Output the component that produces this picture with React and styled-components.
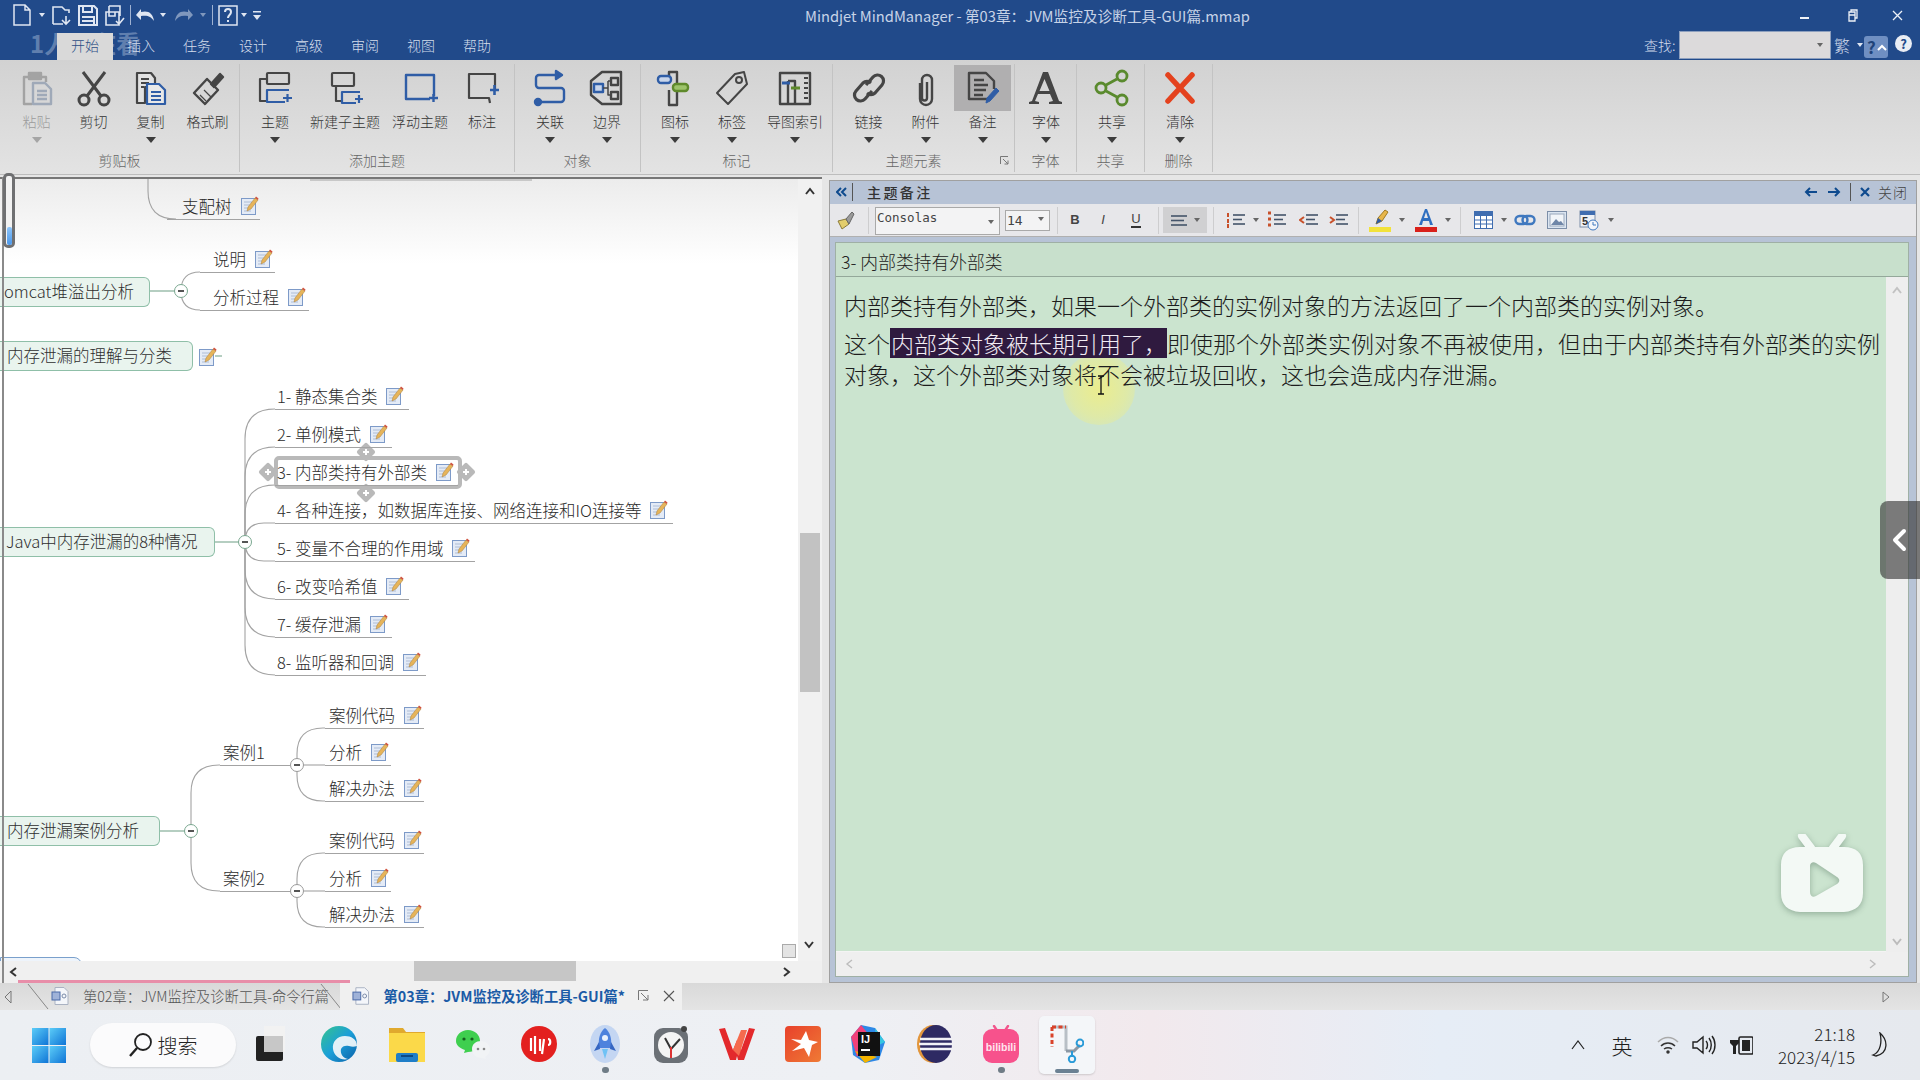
import React from 'react';
import styled, { createGlobalStyle } from 'styled-components';

const CJK = `"Noto Sans CJK SC", "Noto Sans", sans-serif`;
const CANVAS_TOP = 179;

const GlobalStyle = createGlobalStyle`
  html, body { margin: 0; padding: 0; background: #e6e6e6; }
  body { font-family: ${CJK}; overflow: hidden; }
  * { box-sizing: border-box; }
`;

const Page = styled.div`
  position: relative;
  width: 1920px;
  height: 1080px;
  display: flex;
  flex-direction: column;
  overflow: hidden;
`;

/* title bar */
const TitleBar = styled.header`
  height: 60px;
  background: #214a8a;
  color: #d3dcec;
  flex: none;
  position: relative;
`;
const TopRow = styled.div`
  height: 30px;
  display: flex;
  align-items: center;
  padding-left: 8px;
`;
const Qat = styled.div`
  width: ${p => p.$w}px;
  margin-left: ${p => p.$ml || 0}px;
  display: flex;
  justify-content: center;
  align-items: center;
  flex: none;
`;
const QatSep = styled.i`
  width: 1px;
  height: 20px;
  background: #9fb2d2;
  margin-left: ${p => p.$ml || 0}px;
  flex: none;
`;
const WhiteCaret = styled.i`
  width: 0;
  height: 0;
  border-left: 3.5px solid transparent;
  border-right: 3.5px solid transparent;
  border-top: 4px solid ${p => p.$c || '#dfe6f2'};
`;
const AppTitle = styled.div`
  position: absolute;
  left: 805px;
  top: 4px;
  font-size: 14.7px;
  line-height: 24px;
  white-space: nowrap;
  color: #c7d3e7;
`;
const WinControls = styled.div`
  margin-left: auto;
  width: 130px;
  display: flex;
  align-items: center;
  color: #eef2f8;
`;
const WinBtn = styled.div`
  width: ${p => p.$w}px;
  display: flex;
  justify-content: center;
`;
const TabRow = styled.div`
  height: 30px;
  display: flex;
  padding-left: 57px;
`;
const RibbonTab = styled.div`
  position: relative;
  z-index: ${p => (p.$active ? 2 : 0)};
  width: 56px;
  height: ${p => (p.$active ? 27 : 30)}px;
  margin-top: ${p => (p.$active ? 3 : 0)}px;
  background: ${p => (p.$active ? '#d9d9d9' : 'transparent')};
  color: ${p => (p.$active ? '#2d4f86' : '#d5deec')};
  font-size: 14px;
  font-weight: 300;
  line-height: ${p => (p.$active ? 25 : 31)}px;
  text-align: center;
`;
const Watermark = styled.div`
  position: absolute;
  left: 30px;
  top: 27px;
  font-size: 24px;
  font-weight: 700;
  line-height: 32px;
  color: rgba(190, 205, 228, 0.42);
  white-space: nowrap;
  pointer-events: none;
`;
const SearchGroup = styled.div`
  margin-left: auto;
  width: 276px;
  display: flex;
  align-items: center;
  position: relative;
  font-size: 14px;
  font-weight: 300;
`;
const SearchLabel = styled.span`
  width: 35px;
`;
const SearchBox = styled.div`
  width: 152px;
  height: 28px;
  background: #dcdadb;
  border: 1px solid #8d9fbe;
  display: flex;
  align-items: center;
  justify-content: flex-end;
  padding-right: 7px;
`;
const TradIcon = styled.span`
  width: 22px;
  text-align: center;
  font-size: 16px;
  line-height: 20px;
`;
const Bubble = styled.div`
  position: absolute;
  right: 32px;
  top: 6px;
  width: 24px;
  height: 22px;
  border-radius: 3px;
  background: #6f8fc2;
  color: #1f4379;
  font-size: 17px;
  font-weight: 700;
  line-height: 22px;
  padding-left: 3px;
  display: flex;
  align-items: center;
  gap: 1px;
`;
const HelpDot = styled.div`
  position: absolute;
  right: 8px;
  top: 5px;
  width: 17px;
  height: 17px;
  border-radius: 50%;
  background: #e9edf4;
  color: #214a8a;
  font-size: 13px;
  font-weight: 700;
  line-height: 17px;
  text-align: center;
`;

/* ribbon */
const Ribbon = styled.section`
  height: 115px;
  flex: none;
  display: flex;
  background: linear-gradient(#d2d2d2, #e3e3e3);
  padding-top: 4px;
  border-bottom: 1px solid #bdbdbd;
`;
const Group = styled.div`
  width: ${p => p.$w}px;
  height: 108px;
  flex: none;
  border-right: 1px solid #c3c3c3;
  padding-left: ${p => p.$pl}px;
  position: relative;
`;
const GroupRow = styled.div`
  display: flex;
  height: 87px;
  padding-top: 1px;
`;
const GroupLabel = styled.div`
  position: absolute;
  left: 0;
  right: ${p => (p.$offset ? 20 : 0)}px;
  bottom: 3px;
  text-align: center;
  font-size: 14px;
  font-weight: 300;
  line-height: 18px;
  color: #666;
`;
const Launcher = styled.svg`
  position: absolute;
  right: 5px;
  bottom: 7px;
`;
const RibbonBtn = styled.div`
  width: ${p => p.$w}px;
  flex: none;
  display: flex;
  flex-direction: column;
  align-items: center;
`;
const IconBox = styled.div`
  width: 57px;
  height: 46px;
  display: flex;
  align-items: center;
  justify-content: center;
  background: ${p => (p.$active ? '#b0afb0' : 'transparent')};
`;
const BtnLabel = styled.div`
  margin-top: 1px;
  font-size: 14px;
  font-weight: 300;
  line-height: 18px;
  white-space: nowrap;
  color: ${p => (p.$off ? '#9c9c9c' : '#333')};
`;
const DownCaret = styled.i`
  margin-top: 7px;
  width: 0;
  height: 0;
  border-left: 5.5px solid transparent;
  border-right: 5.5px solid transparent;
  border-top: 6px solid ${p => (p.$off ? '#a5a5a5' : '#3c3c3c')};
`;

/* main area */
const Main = styled.main`
  height: 808px;
  flex: none;
  display: flex;
  background: #e6e6e6;
`;
const MapPanel = styled.div`
  width: 822px;
  flex: none;
  padding-top: 2px;
  display: flex;
  flex-direction: column;
  position: relative;
  &::before {
    content: '';
    position: absolute;
    left: 2px;
    top: 2px;
    bottom: 0;
    width: 2px;
    background: #8a8a8a;
    z-index: 3;
  }
`;
const MapBody = styled.div`
  flex: 1;
  display: flex;
  min-height: 0;
  border-top: 2px solid #777;
`;
const MapCanvas = styled.div`
  position: relative;
  flex: 1;
  overflow: hidden;
  background: linear-gradient(#ececec, #fff 85px);
`;
const Lines = styled.svg`
  position: absolute;
  left: 0;
  top: 0;
`;
const MiniScroll = styled.div`
  position: absolute;
  left: 3px;
  top: -2px;
  width: 12px;
  height: 75px;
  border: 3px solid #6f7072;
  border-radius: 5px;
  background: #f2f2f2;
  z-index: 4;
  display: flex;
  align-items: flex-end;
  justify-content: center;
`;
const MiniThumb = styled.div`
  width: 5px;
  height: 18px;
  border-radius: 2px;
  background: linear-gradient(#8cc4fa, #4b97ea);
`;
const Leaf = styled.div`
  position: absolute;
  left: ${p => p.$x}px;
  top: ${p => p.$y - CANVAS_TOP - 27}px;
  width: ${p => p.$w}px;
  height: 28px;
  padding-left: ${p => p.$pl}px;
  display: flex;
  align-items: center;
  gap: 9px;
  border-bottom: 1px solid #a3a3a3;
  font-size: 16.5px;
  font-weight: 300;
  color: #2b2b2b;
  white-space: nowrap;
`;
const Branch = styled.div`
  position: absolute;
  left: ${p => p.$x}px;
  top: ${p => p.$y - CANVAS_TOP - 15}px;
  width: ${p => p.$w}px;
  height: 30px;
  border: 1px solid #8fbfa8;
  border-left: none;
  border-radius: 0 6px 6px 0;
  background: #e9f4ee;
  padding-left: ${p => p.$pl}px;
  font-size: 16.5px;
  font-weight: 300;
  line-height: 27px;
  color: #2e2e2e;
  white-space: nowrap;
  overflow: hidden;
`;
const NoteBeside = styled.div`
  position: absolute;
  left: 199px;
  top: ${356 - CANVAS_TOP - 9}px;
  display: flex;
`;
const Toggle = styled.div`
  position: absolute;
  left: ${p => p.$x - 7}px;
  top: ${p => p.$y - CANVAS_TOP - 7}px;
  width: 14px;
  height: 14px;
  border-radius: 50%;
  border: 1px solid ${p => p.$c || '#9a9a9a'};
  background: #fff;
  display: flex;
  align-items: center;
  justify-content: center;
  &::after {
    content: '';
    width: 6px;
    height: 1.5px;
    background: #555;
  }
`;
const SelectFrame = styled.div`
  position: absolute;
  left: 274px;
  top: ${456 - CANVAS_TOP}px;
  width: 188px;
  height: 33px;
  border: 4px solid #b9b9b9;
  border-radius: 5px;
`;
const Handle = styled.div`
  position: absolute;
  left: ${p => p.$x - 7}px;
  top: ${p => p.$y - CANVAS_TOP - 7}px;
  width: 14px;
  height: 14px;
  background: #b9b9b9;
  transform: rotate(45deg);
  border-radius: 2px;
  display: flex;
  align-items: center;
  justify-content: center;
  &::before, &::after {
    content: '';
    position: absolute;
    width: 6px;
    height: 2px;
    background: #fff;
    transform: rotate(45deg);
  }
  &::after { transform: rotate(-45deg); }
`;
const BlueNode = styled.div`
  position: absolute;
  left: 0;
  top: ${957 - CANVAS_TOP}px;
  width: 82px;
  height: 24px;
  border: 1px solid #7aa0cc;
  border-radius: 0 8px 0 0;
  background: #eef4fb;
`;
const VScroll = styled.div`
  width: 24px;
  flex: none;
  background: #f1f1f1;
  display: flex;
  flex-direction: column;
  align-items: center;
  position: relative;
  padding-top: 7px;
`;
const VThumb = styled.div`
  position: absolute;
  left: 2px;
  right: 2px;
  top: ${533 - CANVAS_TOP}px;
  height: 159px;
  background: #c2c2c2;
`;
const ScrollEnd = styled.div`
  position: absolute;
  bottom: 6px;
  left: 5px;
`;
const FitBox = styled.div`
  position: absolute;
  left: 782px;
  top: ${944 - CANVAS_TOP}px;
  width: 14px;
  height: 14px;
  background: #e4e4e4;
  border: 1px solid #aaa;
`;
const HScroll = styled.div`
  height: 22px;
  flex: none;
  background: #f0f0f0;
  position: relative;
  display: flex;
  align-items: center;
  justify-content: space-between;
  padding: 0 30px 0 8px;
`;
const HThumb = styled.div`
  position: absolute;
  left: 414px;
  top: 0;
  bottom: 2px;
  width: 162px;
  background: #c6c6c6;
`;
const PinkBar = styled.div`
  position: absolute;
  left: 18px;
  bottom: 0;
  width: 332px;
  height: 3px;
  background: #e88ea9;
`;

/* note panel */
const NotePanel = styled.div`
  width: 1088px;
  margin: 5px 0 0 7px;
  flex: none;
  display: flex;
  flex-direction: column;
  background: #b7c3d6;
  border: 1px solid #a0a0a0;
`;
const NoteHeader = styled.div`
  height: 23px;
  flex: none;
  display: flex;
  align-items: center;
  padding: 0 0 2px 6px;
  color: #0e4a8e;
`;
const HeaderTitle = styled.span`
  margin-left: 14px;
  font-size: 14px;
  font-weight: 500;
  letter-spacing: 2.4px;
  color: #333;
`;
const HeadSep = styled.i`
  width: 1px;
  height: 18px;
  background: #555;
  margin-left: ${p => p.$ml}px;
`;
const HeaderRight = styled.div`
  margin-left: auto;
  display: flex;
  align-items: center;
  gap: 9px;
  padding-right: 8px;
  font-size: 14px;
  font-weight: 300;
`;
const CloseLabel = styled.span`
  color: #444;
  margin-left: -1px;
  letter-spacing: 1px;
`;
const NoteTools = styled.div`
  height: 33px;
  flex: none;
  display: flex;
  align-items: center;
  background: #e7e7ea;
  border-bottom: 1px solid #b0b0b0;
`;
const Tool = styled.div`
  width: ${p => p.$w}px;
  margin-left: ${p => p.$ml || 0}px;
  flex: none;
  display: flex;
  align-items: center;
  justify-content: center;
`;
const ToolSep = styled.i`
  width: 1px;
  height: 27px;
  background: #cdcdcf;
  margin-left: ${p => p.$ml}px;
  flex: none;
`;
const FontSelect = styled.div`
  width: 125px;
  height: 28px;
  flex: none;
  margin-left: 6px;
  margin-top: 1px;
  background: #f3f3f4;
  border: 1px solid #a9a9a9;
  padding: 0 0 0 1px;
  font-family: "DejaVu Sans Mono", "Liberation Mono", monospace;
  font-size: 12.5px;
  line-height: 19px;
  color: #444;
  position: relative;
`;
const SizeSelect = styled.div`
  width: 45px;
  height: 21px;
  flex: none;
  margin-left: 5px;
  background: #f3f3f4;
  border: 1px solid #a9a9a9;
  padding-left: 1px;
  font-family: "DejaVu Sans Mono", "Liberation Mono", monospace;
  font-size: 13px;
  line-height: 19px;
  color: #444;
  position: relative;
`;
const SelectCaret = styled.i`
  position: absolute;
  right: ${p => p.$r}px;
  top: ${p => p.$t}px;
  width: 0;
  height: 0;
  border-left: 3.5px solid transparent;
  border-right: 3.5px solid transparent;
  border-top: 4px solid #666;
`;
const FormatLetter = styled.span`
  font-family: "Liberation Sans", Arial, sans-serif;
  font-size: 13px;
  color: #444;
  font-weight: ${p => (p.$b ? 700 : 400)};
  font-style: ${p => (p.$i ? 'italic' : 'normal')};
  border-bottom: ${p => (p.$u ? '2px solid #333' : 'none')};
  line-height: 14px;
`;
const AlignBtn = styled.div`
  width: 44px;
  height: 26px;
  margin-left: 4px;
  flex: none;
  background: #d0d0d2;
  display: flex;
  align-items: center;
  justify-content: center;
  gap: 6px;
`;
const NoteFrame = styled.div`
  flex: 1;
  min-height: 0;
  margin: 5px 7px 5px 5px;
  display: flex;
  flex-direction: column;
  border: 1px solid #9fb0a5;
  background: #eee;
`;
const SubjectBar = styled.div`
  height: 34px;
  flex: none;
  background: #c8e0cc;
  border-bottom: 1px solid #94a89a;
  padding-left: 5px;
  font-size: 17.8px;
  font-weight: 300;
  line-height: 36px;
  color: #222;
`;
const NoteMiddle = styled.div`
  flex: 1;
  min-height: 0;
  display: flex;
`;
const NoteText = styled.div`
  flex: 1;
  position: relative;
  background: #cbe4cf;
  padding: 13px 0 0 8px;
  font-size: 23px;
  font-weight: 300;
  color: #1d1d1d;
  border-bottom: 1px solid #f4f4f4;
  overflow: hidden;
`;
const NoteLine = styled.div`
  position: relative;
  height: ${p => p.$h || 31}px;
  line-height: ${p => p.$h || 31}px;
  margin-top: ${p => p.$mt || 0}px;
  white-space: nowrap;
`;
const Selected = styled.span`
  display: inline-block;
  height: 30px;
  line-height: 30px;
  padding-left: 1px;
  background: #2f1a3f;
  color: #f1ecf4;
`;
const Glow = styled.div`
  position: absolute;
  left: ${1098 - 835 - 36}px;
  top: ${389 - 277 - 36}px;
  width: 72px;
  height: 72px;
  border-radius: 50%;
  background: radial-gradient(rgba(246, 240, 120, 0.75), rgba(246, 240, 120, 0.45) 55%, rgba(246, 240, 120, 0));
`;
const IBeam = styled.svg`
  position: absolute;
  left: ${1100 - 835 - 5}px;
  top: ${375 - 277}px;
`;
const PlayBadge = styled.svg`
  position: absolute;
  right: 22px;
  bottom: 37px;
  filter: drop-shadow(0 2px 3px rgba(80, 110, 90, 0.45));
`;
const InnerVScroll = styled.div`
  width: 22px;
  flex: none;
  background: #eeeeee;
  display: flex;
  flex-direction: column;
  align-items: center;
  justify-content: space-between;
  padding: 8px 0 5px;
`;
const InnerHScroll = styled.div`
  height: 24px;
  flex: none;
  background: #efefef;
  display: flex;
  align-items: center;
  justify-content: space-between;
  padding: 0 30px 0 8px;
`;
const SideTab = styled.div`
  position: absolute;
  right: 0;
  top: 501px;
  width: 40px;
  height: 78px;
  border-radius: 8px 0 0 8px;
  background: rgba(50, 50, 50, 0.62);
  display: flex;
  align-items: center;
  padding-left: 11px;
  z-index: 5;
`;

/* document tabs */
const DocTabs = styled.div`
  height: 27px;
  flex: none;
  display: flex;
  align-items: center;
  background: linear-gradient(#d9d9d9, #e4e4e4);
  position: relative;
`;
const TabLines = styled.svg`
  position: absolute;
  left: 0;
  top: 0;
`;
const DocTab = styled.div`
  position: relative;
  height: 100%;
  width: ${p => p.$w}px;
  margin-left: ${p => p.$ml || 0}px;
  display: flex;
  align-items: center;
  flex: none;
  padding: 0 0 2px ${p => p.$pl}px;
  gap: 13px;
  font-size: ${p => (p.$active ? 14.3 : 14.25)}px;
  font-weight: ${p => (p.$active ? 700 : 300)};
  color: ${p => (p.$active ? '#1b5ba6' : '#555')};
  background: ${p => (p.$active ? '#f0f0f0' : 'transparent')};
  white-space: nowrap;
`;
const TabEnd = styled.div`
  margin-left: auto;
  display: flex;
  align-items: center;
  gap: 14px;
  padding-right: 7px;
  color: #666;
  font-size: 18px;
  font-weight: 300;
`;
const RightArrow = styled.svg`
  position: absolute;
  left: 1882px;
  top: 8px;
`;

/* taskbar */
const Taskbar = styled.footer`
  height: 70px;
  flex: none;
  display: flex;
  align-items: center;
  padding-left: 32px;
  background: linear-gradient(90deg, #eceff3, #eef0f4 45%, #f2e9ed 60%, #e6edf6 75%, #e6e9ee);
`;
const StartLogo = styled.svg`
  flex: none;
`;
const SearchPill = styled.div`
  margin-left: 24px;
  width: 146px;
  height: 44px;
  flex: none;
  border-radius: 22px;
  background: #fbfbfc;
  box-shadow: 0 1px 2px rgba(0, 0, 0, 0.12);
  display: flex;
  align-items: center;
  justify-content: center;
  gap: 5px;
  font-size: 20px;
  font-weight: 300;
  color: #222;
`;
const AppSlot = styled.div`
  position: relative;
  width: 66px;
  height: 58px;
  flex: none;
  display: flex;
  align-items: center;
  justify-content: center;
  margin-left: ${p => p.$ml || 0}px;
  padding-bottom: 2px;
  &::before {
    content: ${p => (p.$active ? '""' : 'none')};
    position: absolute;
    left: 5px;
    right: 5px;
    top: 0;
    bottom: 0;
    border-radius: 5px;
    background: #f4f6f9;
    box-shadow: 0 1px 2px rgba(0, 0, 0, 0.15);
  }
  & > svg { position: relative; }
`;
const RunDot = styled.i`
  position: absolute;
  left: 50%;
  bottom: 1px;
  width: ${p => (p.$active ? 24 : 7)}px;
  height: ${p => (p.$active ? 4 : 6)}px;
  margin-left: ${p => (p.$active ? -12 : -3)}px;
  border-radius: 3px;
  background: ${p => (p.$active ? '#6b8193' : '#6f7c86')};
`;
const Tray = styled.div`
  margin-left: auto;
  display: flex;
  align-items: center;
  color: #1d1d1d;
  height: 100%;
  padding-right: 21px;
`;
const TrayItem = styled.div`
  width: ${p => p.$w}px;
  display: flex;
  justify-content: center;
  flex: none;
`;
const ImeLabel = styled.span`
  font-size: 21px;
  font-weight: 300;
`;
const Clock = styled.div`
  width: 86px;
  text-align: right;
  font-size: 17px;
  font-weight: 300;
  line-height: 23px;
  margin: 0 8px 0 9px;
`;

/* drawings */
const NoteGlyph = styled.svg`
  flex: none;
`;
const NoteIcon = () => (
  <NoteGlyph width="18" height="19" viewBox="0 0 18 19">
    <rect x="0.5" y="2.5" width="14" height="16" fill="#e4ebf6" stroke="#7d9ac8" />
    <path d="M3 6h8M3 9h6M3 12h5M3 15h7" stroke="#aebdd6" />
    <path d="M6 15l1-4 7-9 3 2-7 9z" fill="#e6b45a" stroke="#a87f3a" strokeWidth=".5" />
    <path d="M14 2l1-1.5 2.5 2L17 4z" fill="#d0503c" />
  </NoteGlyph>
);

const S = ({ c, sw = 2, children, w = 38, h = 38, v = 38 }) => (
  <svg width={w} height={h} viewBox={`0 0 ${v} ${v}`} fill="none" stroke={c} strokeWidth={sw} strokeLinejoin="round">
    {children}
  </svg>
);

const dark = '#454545';
const blue = '#2f5da6';

const ribbonIcons = {
  paste: (
    <S c="#a3a3a3" sw={2.4}>
      <path d="M10 8H6v27h8M24 8h4v5" />
      <rect x="11" y="4" width="12" height="6" fill="#a3a3a3" />
      <path d="M15 14h12l6 6v15H15z" fill="#d7d7d7" stroke="#9fa9b8" />
      <path d="M19 22h10M19 26h10M19 30h10" stroke="#9fa9b8" />
    </S>
  ),
  cut: (
    <S c={dark} sw={3}>
      <path d="M8 3l18 24M30 3L12 27" />
      <circle cx="9" cy="31" r="5" />
      <circle cx="29" cy="31" r="5" />
    </S>
  ),
  copy: (
    <S c={dark} sw={2.2}>
      <path d="M5 4h14l4 5v9H13v16H5z" fill="#e2e2e2" />
      <path d="M9 10h8M9 14h8M9 18h3" />
      <path d="M15 15h12l6 6v14H15z" fill="#e8e8e8" stroke={blue} />
      <path d="M19 23h10M19 27h10M19 31h10" stroke={blue} />
    </S>
  ),
  brush: (
    <S c={dark} sw={2.4}>
      <path d="M22 15l9-10 3 3-9 10z" fill={dark} />
      <path d="M18 10l11 11-13 14L5 24z" />
      <path d="M11 26l6 6M15 21l7 7" strokeWidth="1.2" />
    </S>
  ),
  topic: (
    <S c={dark} sw={2.2}>
      <rect x="11" y="4" width="22" height="11" rx="1" />
      <path d="M11 10H4v22h8" />
      <path d="M33 21H11v12h18" stroke={blue} />
      <path d="M27 29h9M31.5 25v8" stroke={blue} />
    </S>
  ),
  child: (
    <S c={dark} sw={2.2}>
      <rect x="6" y="4" width="22" height="13" rx="1" />
      <path d="M10 17v15h6" />
      <path d="M34 23H16v11h14" stroke={blue} />
      <path d="M29 30h8M33 26v8" stroke={blue} />
    </S>
  ),
  floating: (
    <S c={blue} sw={2.4}>
      <path d="M33 27V6H5v24h24" />
      <path d="M28 29h9M32.5 25v8" />
    </S>
  ),
  callout: (
    <S c={dark} sw={2.2}>
      <path d="M32 22V5H6v24h20l1 5" />
      <path d="M27 21h9M31.5 16v10" stroke={blue} strokeWidth="2.6" />
    </S>
  ),
  relate: (
    <S c={blue} sw={2.4}>
      <path d="M26 6H8a3 3 0 0 0-3 3v7a3 3 0 0 0 3 3h22a3 3 0 0 1 3 3v8a3 3 0 0 1-3 3H10" />
      <path d="M25 2l6 4-6 4z" fill={blue} />
      <circle cx="7" cy="33" r="3" fill={blue} />
    </S>
  ),
  boundary: (
    <S c={dark} sw={2.4}>
      <path d="M14 3h19v32H14L3 26V12z" />
      <rect x="6" y="15" width="9" height="8" stroke={blue} fill="#c8d5ea" />
      <rect x="23" y="9" width="7" height="7" />
      <rect x="23" y="23" width="7" height="7" />
      <path d="M15 19h5M20 12v14h3M20 12h3" strokeWidth="1.5" />
    </S>
  ),
  marker: (
    <S c={dark} sw={2.4}>
      <path d="M13 8V3h8v33h-8V21" />
      <rect x="2" y="7" width="13" height="7" rx="3" fill="#c8d5ea" stroke={blue} />
      <rect x="17" y="15" width="15" height="7" rx="3" fill="#9dc36a" stroke="#5f8a2b" />
    </S>
  ),
  tag: (
    <S c={dark} sw={2}>
      <path d="M31 3L34 15 15 35 4 24 22 5z" />
      <circle cx="26" cy="11" r="3" />
    </S>
  ),
  index: (
    <S c={dark} sw={2.4}>
      <rect x="4" y="4" width="30" height="31" />
      <path d="M12 12h7v23M12 12v23" />
      <path d="M6 14h8" stroke={blue} strokeWidth="3" />
      <path d="M15 19h9" stroke="#5f8a2b" strokeWidth="3" />
      <path d="M28 9h4M28 14h4M28 19h4M28 24h4M28 29h4" strokeWidth="2" />
    </S>
  ),
  link: (
    <S c={dark} sw={3.2}>
      <path d="M16 16l7-8a6 6 0 0 1 9 8l-7 8a6 6 0 0 1-8 0" />
      <path d="M22 22l-7 8a6 6 0 0 1-9-8l7-8a6 6 0 0 1 8 0" />
    </S>
  ),
  clip: (
    <S c={dark} sw={2.4}>
      <path d="M13 12v16a6 6 0 0 0 12 0V9a5 5 0 0 0-10 0v18a2.5 2.5 0 0 0 5 0V11" transform="translate(0 2)" />
    </S>
  ),
  note: (
    <S c={dark} sw={2.4}>
      <path d="M24 30H5V4h17l8 8v8" />
      <path d="M10 11h10M10 16h14M10 21h12M10 26h9" />
      <path d="M22 34l1-5 9-10 3 3-9 10z" fill={blue} stroke={blue} strokeWidth="1" />
    </S>
  ),
  font: (
    <S c={dark} sw={0}>
      <path d="M16 3h5l11 29 3 1v2H22v-2l4-1-3-7H11l-3 7 4 1v2H2v-2l3-1zM17.5 10L12.5 22h10z" fill={dark} />
    </S>
  ),
  share: (
    <S c="#5a8a2e" sw={2.8}>
      <circle cx="29" cy="7" r="5" />
      <circle cx="8" cy="19" r="5" />
      <circle cx="29" cy="31" r="5" />
      <path d="M13 16l11-6M13 22l11 6" />
    </S>
  ),
  clear: (
    <S c="#e4421e" sw={5.5}>
      <path d="M7 6l24 26M31 6L7 32" strokeLinecap="round" />
    </S>
  ),
};

const ribbonGroups = [
  { label: '剪贴板', w: 240, pl: 8, btns: [
    { i: 'paste', t: '粘贴', w: 57, off: true, caret: true },
    { i: 'cut', t: '剪切', w: 57 },
    { i: 'copy', t: '复制', w: 57, caret: true },
    { i: 'brush', t: '格式刷', w: 57 },
  ] },
  { label: '添加主题', w: 275, pl: 7, btns: [
    { i: 'topic', t: '主题', w: 56, caret: true },
    { i: 'child', t: '新建子主题', w: 84 },
    { i: 'floating', t: '浮动主题', w: 66 },
    { i: 'callout', t: '标注', w: 58 },
  ] },
  { label: '对象', w: 126, pl: 7, btns: [
    { i: 'relate', t: '关联', w: 56, caret: true },
    { i: 'boundary', t: '边界', w: 58, caret: true },
  ] },
  { label: '标记', w: 192, pl: 6, btns: [
    { i: 'marker', t: '图标', w: 56, caret: true },
    { i: 'tag', t: '标签', w: 58, caret: true },
    { i: 'index', t: '导图索引', w: 68, caret: true },
  ] },
  { label: '主题元素', w: 182, pl: 7, launcher: true, btns: [
    { i: 'link', t: '链接', w: 57, caret: true },
    { i: 'clip', t: '附件', w: 57, caret: true },
    { i: 'note', t: '备注', w: 57, caret: true, active: true },
  ] },
  { label: '字体', w: 62, pl: 2, btns: [{ i: 'font', t: '字体', w: 58, caret: true }] },
  { label: '共享', w: 68, pl: 6, btns: [{ i: 'share', t: '共享', w: 58, caret: true }] },
  { label: '删除', w: 68, pl: 6, btns: [{ i: 'clear', t: '清除', w: 58, caret: true }] },
];

const curve = (sx, cy, y, end, r = 28) => {
  const dy = y - cy;
  const top = CANVAS_TOP;
  if (dy === 0) return `M${sx} ${cy - top}H${end}`;
  const s = Math.sign(dy);
  const rr = Math.min(Math.abs(dy), r);
  return `M${sx} ${cy - top}V${y - s * rr - top}Q${sx} ${y - top} ${sx + rr} ${y - top}H${end}`;
};

const leaves = [
  { t: '支配树', x: 167, y: 219, end: 260, tx: 182 },
  { t: '说明', x: 200, y: 272, end: 275, tx: 213 },
  { t: '分析过程', x: 200, y: 310, end: 309, tx: 213 },
  { t: '1- 静态集合类', x: 275, y: 409, end: 409, tx: 277 },
  { t: '2- 单例模式', x: 275, y: 447, end: 392, tx: 277 },
  { t: '3- 内部类持有外部类', x: 275, y: 485, end: 458, tx: 277 },
  { t: '4- 各种连接，如数据库连接、网络连接和IO连接等', x: 275, y: 523, end: 673, tx: 277 },
  { t: '5- 变量不合理的作用域', x: 275, y: 561, end: 475, tx: 277 },
  { t: '6- 改变哈希值', x: 275, y: 599, end: 409, tx: 277 },
  { t: '7- 缓存泄漏', x: 275, y: 637, end: 392, tx: 277 },
  { t: '8- 监听器和回调', x: 275, y: 675, end: 426, tx: 277 },
  { t: '案例1', x: 220, y: 765, end: 290, tx: 223, plain: true },
  { t: '案例2', x: 220, y: 891, end: 290, tx: 223, plain: true },
  { t: '案例代码', x: 325, y: 728, end: 424, tx: 329 },
  { t: '分析', x: 325, y: 765, end: 391, tx: 329 },
  { t: '解决办法', x: 325, y: 801, end: 424, tx: 329 },
  { t: '案例代码', x: 325, y: 853, end: 424, tx: 329 },
  { t: '分析', x: 325, y: 891, end: 391, tx: 329 },
  { t: '解决办法', x: 325, y: 927, end: 424, tx: 329 },
];

const branches = [
  { t: 'omcat堆溢出分析', x: 0, y: 292, w: 150, pl: 4 },
  { t: '内存泄漏的理解与分类', x: 0, y: 356, w: 193, pl: 7 },
  { t: 'Java中内存泄漏的8种情况', x: 0, y: 542, w: 215, pl: 6 },
  { t: '内存泄漏案例分析', x: 0, y: 831, w: 160, pl: 7 },
];

const connectors = [
  'M310 1H532',
  curve(148, 170, 219, 170),
  curve(181, 291, 272, 200),
  curve(181, 291, 310, 200),
  ...[409, 447, 485, 523, 561, 599, 637, 675].map(y => curve(245, 542, y, 275, 30)),
  curve(191, 831, 765, 220, 28),
  curve(191, 831, 891, 220, 28),
  ...[728, 765, 801].map(y => curve(297, 765, y, 325, 26)),
  ...[853, 891, 927].map(y => curve(297, 891, y, 325, 26)),
];

const greenLinks = [
  `M150 ${291 - CANVAS_TOP}H175`,
  `M215 ${356 - CANVAS_TOP}H222`,
  `M215 ${542 - CANVAS_TOP}H239`,
  `M160 ${831 - CANVAS_TOP}H185`,
];

const Chevron = ({ d, c = '#333', size = 12, sw = 2 }) => {
  const paths = {
    left: 'M8 2L3 6l5 4',
    right: 'M4 2l5 4-5 4',
    up: 'M2 8l4-5 4 5',
    down: 'M2 4l4 5 4-5',
  };
  return (
    <svg width={size} height={size} viewBox="0 0 12 12" fill="none" stroke={c} strokeWidth={sw}>
      <path d={paths[d]} />
    </svg>
  );
};

const lines = (n, c, x1 = 2, x2 = 16) =>
  Array.from({ length: n }, (_, i) => <path key={i} d={`M${x1} ${4 + i * 4.5}H${i % 2 ? x2 - 3 : x2}`} stroke={c} strokeWidth="1.6" />);

const DocIcon = () => (
  <svg width="20" height="20" viewBox="0 0 20 20" fill="none">
    <path d="M5 1.5h9l4 4v13H5z" fill="#f4f6fa" stroke="#aab2c2" />
    <rect x="2" y="6" width="8" height="8" fill="#9fb2d8" stroke="#4a6aa8" />
    <circle cx="14" cy="10" r="2" stroke="#7a8aa8" />
  </svg>
);

const App = () => (
  <Page>
    <GlobalStyle />
    <TitleBar>
      <TopRow>
        <Qat $w={28}>
          <svg width="20" height="22" viewBox="0 0 20 22" fill="none" stroke="#dfe6f2" strokeWidth="1.5"><path d="M2 1h11l5 5v15H2zM13 1v5h5" /></svg>
        </Qat>
        <Qat $w={12}><WhiteCaret /></Qat>
        <Qat $w={26}>
          <svg width="22" height="21" viewBox="0 0 22 21" fill="none" stroke="#dfe6f2" strokeWidth="1.6"><path d="M3 19V2h9l3 3h4v3M3 19h10M16 11v8M12 15l4 4 4-4" /></svg>
        </Qat>
        <Qat $w={28}>
          <svg width="20" height="21" viewBox="0 0 20 21" fill="none" stroke="#dfe6f2" strokeWidth="2"><path d="M1 1h15l3 3v16H1zM5 1v6h9V1M4 12h12v8M4 16h12" /></svg>
        </Qat>
        <Qat $w={24}>
          <svg width="21" height="21" viewBox="0 0 21 21" fill="none" stroke="#dfe6f2" strokeWidth="1.6"><path d="M5 1h11v10M5 1v6M2 7h13v13H2zM5 7v4h6V7M12 16l3 3 5-6" /></svg>
        </Qat>
        <QatSep $ml={4} />
        <Qat $w={28}>
          <svg width="20" height="16" viewBox="0 0 20 16" fill="#dfe6f2"><path d="M1 8l5-6v3c7-2 12 1 13 9-3-5-7-6-13-5v4z" /></svg>
        </Qat>
        <Qat $w={8}><WhiteCaret /></Qat>
        <Qat $w={28} $ml={3}>
          <svg width="20" height="16" viewBox="0 0 20 16" fill="#7f97bd"><path d="M19 8l-5-6v3C7 3 2 6 1 14c3-5 7-6 13-5v4z" /></svg>
        </Qat>
        <Qat $w={10}><WhiteCaret $c="#7f97bd" /></Qat>
        <QatSep $ml={4} />
        <Qat $w={26} $ml={2}>
          <svg width="20" height="21" viewBox="0 0 20 21" fill="none" stroke="#dfe6f2" strokeWidth="1.5"><rect x="1" y="1" width="18" height="19" /><path d="M7 7c0-4 6-4 6 0 0 3-3 3-3 6M10 15v2" strokeWidth="2" /></svg>
        </Qat>
        <Qat $w={6}><WhiteCaret /></Qat>
        <Qat $w={10} $ml={5}>
          <svg width="8" height="9" viewBox="0 0 8 9" fill="#dfe6f2"><rect width="8" height="1.5" /><path d="M0 4h8L4 9z" /></svg>
        </Qat>
        <WinControls>
          <WinBtn $w={28}>
            <svg width="9" height="8" viewBox="0 0 9 8"><rect y="6" width="9" height="2" fill="#eef2f8" /></svg>
          </WinBtn>
          <WinBtn $w={70}>
            <svg width="10" height="13" viewBox="0 0 10 13" fill="none" stroke="#eef2f8" strokeWidth="1.3"><path d="M3 3V1h6v8H7M1 3h6v9H1zM1 6h6" /></svg>
          </WinBtn>
          <WinBtn $w={18}>
            <svg width="11" height="11" viewBox="0 0 11 11" stroke="#eef2f8" strokeWidth="1.3"><path d="M1 1l9 9M10 1l-9 9" /></svg>
          </WinBtn>
        </WinControls>
      </TopRow>
      <TabRow>
        {['开始', '插入', '任务', '设计', '高级', '审阅', '视图', '帮助'].map((t, i) => (
          <RibbonTab key={t} $active={i === 0}>{t}</RibbonTab>
        ))}
        <SearchGroup>
          <SearchLabel>查找:</SearchLabel>
          <SearchBox><WhiteCaret $c="#666" /></SearchBox>
          <TradIcon>繁</TradIcon>
          <Qat $w={14}><WhiteCaret /></Qat>
          <Bubble>
            ?
            <svg width="10" height="7" viewBox="0 0 10 7" fill="none" stroke="#fff" strokeWidth="2"><path d="M1 6l4-4 4 4" /></svg>
          </Bubble>
          <HelpDot>?</HelpDot>
        </SearchGroup>
      </TabRow>
      <AppTitle>Mindjet MindManager - 第03章：JVM监控及诊断工具-GUI篇.mmap</AppTitle>
      <Watermark>1人正在看</Watermark>
    </TitleBar>

    <Ribbon>
      {ribbonGroups.map(g => (
        <Group key={g.label} $w={g.w} $pl={g.pl}>
          <GroupRow>
            {g.btns.map(b => (
              <RibbonBtn key={b.t} $w={b.w}>
                <IconBox $active={b.active}>{ribbonIcons[b.i]}</IconBox>
                <BtnLabel $off={b.off}>{b.t}</BtnLabel>
                {b.caret && <DownCaret $off={b.off} />}
              </RibbonBtn>
            ))}
          </GroupRow>
          <GroupLabel $offset={g.launcher}>{g.label}</GroupLabel>
          {g.launcher && (
            <Launcher width="9" height="9" viewBox="0 0 9 9" fill="none" stroke="#777"><path d="M.5 8V.5H8M3 3l5 5M8 4.5V8H4.5" /></Launcher>
          )}
        </Group>
      ))}
    </Ribbon>

    <Main>
      <MapPanel>
        <MiniScroll><MiniThumb /></MiniScroll>
        <MapBody>
          <MapCanvas>
            <Lines width="798" height="790" fill="none" stroke="#a3a3a3" strokeWidth="1.1">
              {connectors.map((d, i) => <path key={i} d={d} />)}
              {greenLinks.map((d, i) => <path key={i} d={d} stroke="#79a78f" />)}
            </Lines>
            {branches.map(b => (
              <Branch key={b.t} $x={b.x} $y={b.y} $w={b.w} $pl={b.pl}>{b.t}</Branch>
            ))}
            <NoteBeside><NoteIcon /></NoteBeside>
            <SelectFrame />
            <Handle $x={268} $y={472} />
            <Handle $x={466} $y={472} />
            <Handle $x={366} $y={452} />
            <Handle $x={366} $y={493} />
            {leaves.map(l => (
              <Leaf key={`${l.t}${l.y}`} $x={l.x} $y={l.y} $w={l.end - l.x} $pl={l.tx - l.x}>
                <span>{l.t}</span>
                {!l.plain && <NoteIcon />}
              </Leaf>
            ))}
            <Toggle $x={181} $y={291} $c="#79a78f" />
            <Toggle $x={245} $y={542} $c="#79a78f" />
            <Toggle $x={191} $y={831} $c="#79a78f" />
            <Toggle $x={297} $y={765} />
            <Toggle $x={297} $y={891} />
            <BlueNode />
            <FitBox />
          </MapCanvas>
          <VScroll>
            <Chevron d="up" />
            <VThumb />
            <ScrollEnd><Chevron d="down" /></ScrollEnd>
          </VScroll>
        </MapBody>
        <HScroll>
          <Chevron d="left" />
          <HThumb />
          <Chevron d="right" />
          <PinkBar />
        </HScroll>
      </MapPanel>

      <NotePanel>
        <NoteHeader>
          <svg width="11" height="10" viewBox="0 0 11 10" fill="none" stroke="#0e4a8e" strokeWidth="2"><path d="M5 1L1 5l4 4M10 1L6 5l4 4" /></svg>
          <HeadSep $ml={5} />
          <HeaderTitle>主题备注</HeaderTitle>
          <HeaderRight>
            <svg width="14" height="10" viewBox="0 0 14 10" fill="none" stroke="#0e4a8e" strokeWidth="2"><path d="M13 5H2M6 1L2 5l4 4" /></svg>
            <svg width="14" height="10" viewBox="0 0 14 10" fill="none" stroke="#0e4a8e" strokeWidth="2"><path d="M1 5h11M8 1l4 4-4 4" /></svg>
            <HeadSep $ml={0} />
            <svg width="10" height="10" viewBox="0 0 10 10" stroke="#0e4a8e" strokeWidth="2.2"><path d="M1 1l8 8M9 1L1 9" /></svg>
            <CloseLabel>关闭</CloseLabel>
          </HeaderRight>
        </NoteHeader>
        <NoteTools>
          <Tool $w={32}>
            <svg width="20" height="20" viewBox="0 0 20 20"><path d="M2 11l8-2 3 5-7 5z" fill="#e3cd6c" stroke="#8a7a3a" /><path d="M10 9l6-7 2 2-5 10z" fill="#9a9a9a" stroke="#666" /></svg>
          </Tool>
          <ToolSep $ml={6} />
          <FontSelect>
            Consolas
            <SelectCaret $r={5} $t={12} />
          </FontSelect>
          <SizeSelect>
            14
            <SelectCaret $r={5} $t={6} />
          </SizeSelect>
          <ToolSep $ml={7} />
          <Tool $w={28} $ml={3}><FormatLetter $b>B</FormatLetter></Tool>
          <Tool $w={28}><FormatLetter $i>I</FormatLetter></Tool>
          <Tool $w={28} $ml={5}><FormatLetter $u>U</FormatLetter></Tool>
          <ToolSep $ml={8} />
          <AlignBtn>
            <svg width="18" height="16" viewBox="0 0 18 16">{lines(3, '#44546a', 1, 17)}</svg>
            <WhiteCaret $c="#666" />
          </AlignBtn>
          <ToolSep $ml={6} />
          <Tool $w={28} $ml={8}>
            <svg width="20" height="18" viewBox="0 0 20 18"><path d="M2 2v4M2 8v4M2 13v4" stroke="#c8502a" strokeWidth="2" />{lines(3, '#44546a', 7, 19)}</svg>
          </Tool>
          <Tool $w={12}><WhiteCaret $c="#666" /></Tool>
          <Tool $w={30}>
            <svg width="20" height="18" viewBox="0 0 20 18"><path d="M1 2h3M1 8h3M1 14h3" stroke="#c8502a" strokeWidth="3" />{lines(3, '#44546a', 7, 19)}</svg>
          </Tool>
          <Tool $w={34}>
            <svg width="20" height="18" viewBox="0 0 20 18"><path d="M5 6L1 9l4 3" fill="none" stroke="#c8502a" strokeWidth="2" />{lines(3, '#44546a', 7, 19)}</svg>
          </Tool>
          <Tool $w={26}>
            <svg width="20" height="18" viewBox="0 0 20 18"><path d="M1 6l4 3-4 3" fill="none" stroke="#c8502a" strokeWidth="2" />{lines(3, '#44546a', 7, 19)}</svg>
          </Tool>
          <ToolSep $ml={6} />
          <Tool $w={28} $ml={7}>
            <svg width="24" height="24" viewBox="0 0 24 24"><path d="M8 16l2-6 7-8 3 2-6 9z" fill="#e7b64c" stroke="#a07a20" /><path d="M8 16l2-6 4 3z" fill="#2c5ba6" /><rect x="1" y="19" width="22" height="5" fill="#f2e23a" /></svg>
          </Tool>
          <Tool $w={16}><WhiteCaret $c="#666" /></Tool>
          <Tool $w={31}>
            <svg width="22" height="24" viewBox="0 0 22 24"><path d="M4 17L10 1h2l6 16h-3l-1-4H8l-1 4zM9 10h4l-2-6z" fill="#2f6fc0" /><rect y="19" width="22" height="5" fill="#d9201a" /></svg>
          </Tool>
          <Tool $w={14}><WhiteCaret $c="#666" /></Tool>
          <ToolSep $ml={5} />
          <Tool $w={28} $ml={8}>
            <svg width="19" height="18" viewBox="0 0 19 18" fill="#fff" stroke="#3f6db0"><rect x=".5" y=".5" width="18" height="17" /><rect x=".5" y=".5" width="18" height="4" fill="#3f6db0" /><path d="M.5 9h18M.5 13h18M6.5 4v14M12.5 4v14" /></svg>
          </Tool>
          <Tool $w={14}><WhiteCaret $c="#666" /></Tool>
          <Tool $w={28}>
            <svg width="22" height="12" viewBox="0 0 22 12" fill="none" stroke="#3f78bf" strokeWidth="2.4"><rect x="1.5" y="2" width="12" height="8" rx="4" /><rect x="8.5" y="2" width="12" height="8" rx="4" /></svg>
          </Tool>
          <Tool $w={36}>
            <svg width="20" height="18" viewBox="0 0 20 18"><rect x=".5" y=".5" width="19" height="17" fill="#dbe5f1" stroke="#7c8ea8" /><rect x="3" y="3" width="14" height="12" fill="#f2f5f9" stroke="#9aa8bc" /><path d="M4 14l5-6 3 3 2-1 3 4z" fill="#6f86a8" /></svg>
          </Tool>
          <Tool $w={28}>
            <svg width="20" height="21" viewBox="0 0 20 21"><rect x="1" y="1" width="15" height="16" fill="#eef1f6" stroke="#7c8ea8" /><rect x="1" y="1" width="15" height="4" fill="#3f6db0" /><text x="3" y="15" fontSize="11" fontWeight="700" fill="#333" fontFamily="Liberation Sans">5</text><circle cx="14" cy="15" r="5" fill="#f4f6fa" stroke="#3f78bf" /><path d="M14 12v3h3" stroke="#3f78bf" fill="none" /></svg>
          </Tool>
          <Tool $w={16}><WhiteCaret $c="#666" /></Tool>
        </NoteTools>
        <NoteFrame>
          <SubjectBar>3- 内部类持有外部类</SubjectBar>
          <NoteMiddle>
            <NoteText>
              <Glow />
              <NoteLine $h={30}>内部类持有外部类，如果一个外部类的实例对象的方法返回了一个内部类的实例对象。</NoteLine>
              <NoteLine $mt={8}>这个<Selected>内部类对象被长期引用了，</Selected>即使那个外部类实例对象不再被使用，但由于内部类持有外部类的实例</NoteLine>
              <NoteLine>对象，这个外部类对象将不会被垃圾回收，这也会造成内存泄漏。</NoteLine>
              <IBeam width="10" height="20" viewBox="0 0 10 20" fill="none" stroke="#111" strokeWidth="1.3"><path d="M2 1h6M5 1v18M2 19h6" /></IBeam>
              <PlayBadge width="84" height="80" viewBox="0 0 84 80">
                <path d="M22 2l9 12M62 2l-9 12" stroke="#f3f9f5" strokeWidth="8" strokeLinecap="round" />
                <path fillRule="evenodd" fill="#f3f9f5" d="M20 13h44c12 0 19 6 19 18v28c0 12-7 18-19 19H20C8 77 1 71 1 59V31c0-12 7-18 19-18zM30 32v26c0 4 3 6 6 4l21-12c3-2 3-5 0-7L36 29c-3-2-6 0-6 3z" />
              </PlayBadge>
            </NoteText>
            <InnerVScroll>
              <Chevron d="up" c="#c2c2c2" />
              <Chevron d="down" c="#bcbcbc" />
            </InnerVScroll>
          </NoteMiddle>
          <InnerHScroll>
            <Chevron d="left" c="#bcbcbc" sw={1.4} />
            <Chevron d="right" c="#bcbcbc" sw={1.4} />
          </InnerHScroll>
        </NoteFrame>
      </NotePanel>
    </Main>

    <DocTabs>
      <TabLines width="340" height="27" viewBox="0 0 340 27" fill="none" stroke="#888">
        <path d="M28 1l20 25M321 1l20 25" />
        <path d="M11 8l-6 6 6 6z" stroke="#777" />
      </TabLines>
      <DocTab $w={290} $ml={50} $pl={0}><DocIcon />第02章：JVM监控及诊断工具-命令行篇</DocTab>
      <DocTab $w={342} $pl={11} $active>
        <DocIcon />第03章：JVM监控及诊断工具-GUI篇*
        <TabEnd>
          <svg width="11" height="11" viewBox="0 0 11 11" fill="none" stroke="#777"><path d="M.5 10V.5H10M3 3l7 7M10 5v5H5" /></svg>
          <svg width="12" height="12" viewBox="0 0 12 12" stroke="#555" strokeWidth="1.1"><path d="M1 1l10 10M11 1L1 11" /></svg>
        </TabEnd>
      </DocTab>
      <RightArrow width="8" height="12" viewBox="0 0 8 12" fill="none" stroke="#777"><path d="M1 1l6 5-6 5z" /></RightArrow>
    </DocTabs>

    <Taskbar>
      <StartLogo width="34" height="35" viewBox="0 0 34 35">
        <defs><linearGradient id="win" x1="0" y1="0" x2="1" y2="1"><stop offset="0" stopColor="#5ccdf8" /><stop offset="1" stopColor="#0f74d6" /></linearGradient></defs>
        <rect width="16.5" height="17" fill="url(#win)" />
        <rect x="17.5" width="16.5" height="17" fill="url(#win)" />
        <rect y="18" width="16.5" height="17" fill="url(#win)" />
        <rect x="17.5" y="18" width="16.5" height="17" fill="url(#win)" />
      </StartLogo>
      <SearchPill>
        <svg width="24" height="26" viewBox="0 0 24 26" fill="none" stroke="#222" strokeWidth="1.8"><circle cx="14" cy="10" r="8" /><path d="M8 16l-7 8" strokeWidth="2.4" /></svg>
        搜索
      </SearchPill>
      <AppSlot $ml={1}>
        <svg width="30" height="36" viewBox="0 0 30 36"><rect x="9" width="25" height="26" fill="#f2f2f2" /><rect x="1" y="10" width="27" height="25" rx="2" fill="#222" /><rect x="9" y="10" width="19" height="16" fill="#c7c7c7" /></svg>
      </AppSlot>
      <AppSlot $ml={3}>
        <svg width="36" height="36" viewBox="0 0 36 36">
          <defs><linearGradient id="edge" x1="0" y1="0" x2="1" y2="1"><stop offset="0" stopColor="#35c48d" /><stop offset=".5" stopColor="#1b9fd8" /><stop offset="1" stopColor="#0b5fa8" /></linearGradient></defs>
          <circle cx="18" cy="18" r="18" fill="url(#edge)" />
          <path d="M36 20c0-7-6-10-12-10-8 0-13 6-12 13 1 7 8 12 15 10-5-1-8-5-7-10 1-3 5-4 8-3 3 1 5 1 8 0z" fill="#f3f7fa" opacity=".92" />
        </svg>
      </AppSlot>
      <AppSlot $ml={2}>
        <svg width="36" height="36" viewBox="0 0 36 36"><path d="M0 2h14l3 4h19v30H0z" fill="#e0a92e" /><rect y="7" width="36" height="29" fill="#fbd949" /><rect x="7" y="27" width="22" height="9" rx="2" fill="#1f7ec8" /><rect x="12" y="29" width="12" height="2" fill="#0b4a85" /></svg>
      </AppSlot>
      <AppSlot>
        <svg width="36" height="30" viewBox="0 0 36 30"><path d="M13 1c7 0 12 5 12 11s-5 11-12 11l-4 1 1-3C4 19 1 16 1 12 1 6 6 1 13 1z" fill="#3fcf4f" /><circle cx="9" cy="10" r="1.6" fill="#14601f" /><circle cx="17" cy="10" r="1.6" fill="#14601f" /><path d="M26 12c5 0 9 4 9 8s-3 7-5 8l1 2-4-1c-6 0-10-4-10-9s4-8 9-8z" fill="#f1f3f5" /><circle cx="23" cy="20" r="1.3" fill="#888" /><circle cx="29" cy="20" r="1.3" fill="#888" /></svg>
      </AppSlot>
      <AppSlot>
        <svg width="36" height="36" viewBox="0 0 36 36"><circle cx="18" cy="18" r="18" fill="#e3201f" /><path d="M10 12v13M14 10v18M19 13v12M23 13l-2 15M27 13c3 0 3 6 0 6" stroke="#fff" strokeWidth="2.2" fill="none" /></svg>
      </AppSlot>
      <AppSlot>
        <svg width="30" height="38" viewBox="0 0 30 38"><ellipse cx="15" cy="19" rx="15" ry="19" fill="#c4d6f2" /><path d="M15 3c5 4 7 10 6 20h-12C8 13 10 7 15 3z" fill="#4d82dd" /><path d="M9 17l-5 9 6-2zM21 17l5 9-6-2z" fill="#3566c2" /><path d="M12 24h6l-3 10z" fill="#6fc2f5" /><circle cx="15" cy="13" r="3" fill="#e9f1fd" /></svg>
        <RunDot />
      </AppSlot>
      <AppSlot>
        <svg width="36" height="38" viewBox="0 0 36 38"><rect x="1" y="3" width="34" height="35" rx="9" fill="#6b7076" /><circle cx="18" cy="20" r="13" fill="#f4f4f4" /><path d="M18 24L12 13M18 24l9-10" stroke="#333" strokeWidth="2" /><path d="M18 22v11" stroke="#d33" strokeWidth="2" /><circle cx="31" cy="4" r="3" fill="#444" /></svg>
      </AppSlot>
      <AppSlot>
        <svg width="36" height="32" viewBox="0 0 36 32"><path d="M0 1l6-1 8 22 4-10 4 10 8-22 6 1-11 31h-6l-1-4-1 4h-6z" fill="#e3292c" /><path d="M14 22l8-20h6l-8 26z" fill="#f56a4e" /></svg>
      </AppSlot>
      <AppSlot>
        <svg width="36" height="36" viewBox="0 0 36 36"><defs><linearGradient id="xm" x1="0" y1="0" x2="1" y2="1"><stop offset="0" stopColor="#e8412b" /><stop offset="1" stopColor="#ef7a35" /></linearGradient></defs><rect width="36" height="36" rx="4" fill="url(#xm)" /><path d="M6 13l10 5-9 7 12-3 5 9 3-12 6-3-9-2-3-9-5 9z" fill="#fff" /></svg>
      </AppSlot>
      <AppSlot>
        <svg width="36" height="38" viewBox="0 0 36 38"><path d="M10 0l14 3 10 14-6 18-14 3L2 30 0 12z" fill="#2e88e6" /><path d="M10 0L0 12l6 20 12-22z" fill="#f0407a" /><path d="M24 3l10 14-8 4z" fill="#35c6e0" /><path d="M4 26l10 12 12-6z" fill="#f4b400" /><rect x="7" y="7" width="22" height="24" fill="#111" /><text x="10" y="18" fontSize="11" fontWeight="700" fill="#fff" fontFamily="Liberation Sans">IJ</text><rect x="10" y="24" width="9" height="2" fill="#fff" /></svg>
      </AppSlot>
      <AppSlot>
        <svg width="36" height="38" viewBox="0 0 36 38"><ellipse cx="16" cy="19" rx="16" ry="19" fill="#e2963c" /><ellipse cx="19" cy="19" rx="16" ry="19" fill="#2e2a63" /><path d="M3 14h32M2 19h34M3 24h32" stroke="#f1f1f6" strokeWidth="2.6" /></svg>
      </AppSlot>
      <AppSlot>
        <svg width="36" height="38" viewBox="0 0 36 38"><path d="M11 1l4 6M25 1l-4 6" stroke="#f0568c" strokeWidth="2.4" strokeLinecap="round" /><rect y="4" width="36" height="34" rx="9" fill="#f7528c" /><text x="18" y="26" fontSize="10.5" fontWeight="700" textAnchor="middle" fill="#ffe6ef" fontFamily="Liberation Sans">bilibili</text></svg>
        <RunDot />
      </AppSlot>
      <AppSlot $active>
        <svg width="34" height="38" viewBox="0 0 34 38" fill="none"><path d="M2 2h14v24" stroke="#b8bfc6" strokeWidth="3" /><path d="M2 2v20M2 2h14" stroke="#d9432a" strokeWidth="3" strokeDasharray="4 2.5" /><path d="M16 26h8l6-6" stroke="#8c98a4" strokeWidth="3" /><circle cx="30" cy="18" r="3.4" stroke="#2a9bd8" strokeWidth="2" /><path d="M22 26v6" stroke="#2a9bd8" strokeWidth="2" /><circle cx="22" cy="34" r="3.2" stroke="#2a9bd8" strokeWidth="2" /></svg>
        <RunDot $active />
      </AppSlot>
      <Tray>
        <TrayItem $w={32}>
          <svg width="14" height="10" viewBox="0 0 14 10" fill="none" stroke="#222" strokeWidth="1.2"><path d="M1 9l6-8 6 8" /></svg>
        </TrayItem>
        <TrayItem $w={56}><ImeLabel>英</ImeLabel></TrayItem>
        <TrayItem $w={36}>
          <svg width="22" height="18" viewBox="0 0 22 18" fill="none" stroke="#333" strokeWidth="1.5"><path d="M1 6c6-6 14-6 20 0" stroke="#aaa" /><path d="M4 10c4-4 10-4 14 0M7 13c3-2 5-2 8 0" /><circle cx="11" cy="16" r="1" fill="#333" /></svg>
        </TrayItem>
        <TrayItem $w={36}>
          <svg width="26" height="22" viewBox="0 0 26 22" fill="none" stroke="#222" strokeWidth="1.4"><path d="M2 8h4l6-5v16l-6-5H2zM15 7c2 2 2 6 0 8M18 4c3 4 3 10 0 14M21 2c4 5 4 13 0 18" /></svg>
        </TrayItem>
        <TrayItem $w={38}>
          <svg width="24" height="22" viewBox="0 0 24 22" fill="#222"><path d="M3 1v5M8 1v5M1 6h9v3l-3 3v8H4v-8L1 9z" /><rect x="10" y="3" width="14" height="17" rx="1.5" fill="none" stroke="#222" strokeWidth="1.6" /><rect x="13" y="6" width="8" height="11" /></svg>
        </TrayItem>
        <Clock>21:18<br />2023/4/15</Clock>
        <TrayItem $w={36}>
          <svg width="20" height="26" viewBox="0 0 20 26" fill="none" stroke="#222" strokeWidth="1.3"><path d="M9 1c8 7 9 20-4 23l-3-1C10 20 11 9 9 1z" /></svg>
        </TrayItem>
      </Tray>
    </Taskbar>

    <SideTab>
      <svg width="17" height="24" viewBox="0 0 17 24" fill="none" stroke="#fff" strokeWidth="4" strokeLinecap="round" strokeLinejoin="round"><path d="M13 3L4 12l9 9" /></svg>
    </SideTab>
  </Page>
);

export default App;
